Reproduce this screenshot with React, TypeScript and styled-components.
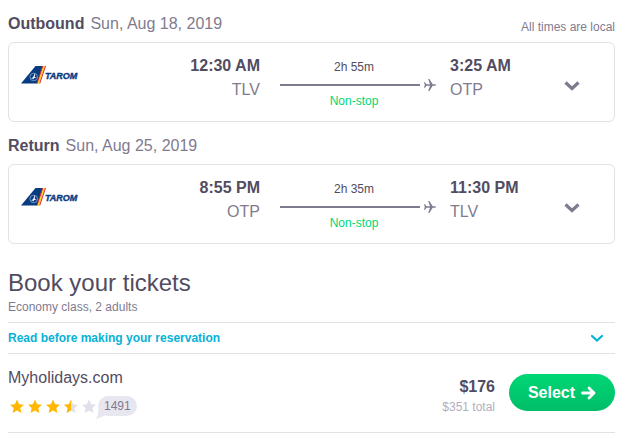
import React from "react";
import styled, { createGlobalStyle } from "styled-components";

const ink = "#524c61";
const muted = "#7f7b8f";
const line = "#e1e1e8";
const green = "#00d775";
const blue = "#06b2d6";

const GlobalStyle = createGlobalStyle`
  * { box-sizing: border-box; }
  body {
    margin: 0;
    background: #fff;
    color: ${ink};
    font-family: "Liberation Sans", Arial, sans-serif;
    font-size: 16px;
    line-height: 24px;
  }
  h2, h3, p { margin: 0; font-weight: 400; }
  button { font: inherit; border: 0; padding: 0; background: none; cursor: pointer; }
  svg { display: block; flex: none; }
`;

const Page = styled.main`
  padding: 0 25px 0 8px;
`;

const LegHeader = styled.header`
  display: flex;
  justify-content: space-between;
  align-items: flex-end;
  padding: 12px 0 6px;
`;

const LegTitle = styled.h3`
  font-size: 16px;
  display: flex;
  gap: 6px;
`;

const LegDate = styled.span`
  color: ${muted};
`;

const Small = styled.p<{ $color?: string }>`
  font-size: 12px;
  line-height: 16px;
  color: ${(p) => p.$color ?? muted};
`;

const Note = styled(Small)`
  line-height: 18px;
`;

const LegCard = styled.article`
  display: grid;
  grid-template-columns: 58px 1fr 190px 102px 40px;
  align-items: start;
  padding: 11px 22px 9px 12px;
  border: 1px solid ${line};
  border-radius: 6px;
`;

const LogoBox = styled.div`
  padding-top: 11px;
`;

const Stop = styled.div<{ $align: "left" | "right" }>`
  text-align: ${(p) => p.$align};
`;

const Airport = styled.div`
  color: ${muted};
`;

const Path = styled.div`
  display: flex;
  flex-direction: column;
  align-items: center;
  padding: 5px 14px 3px 20px;
`;

const Track = styled.div`
  display: flex;
  align-items: center;
  align-self: stretch;
  gap: 4px;
  height: 20px;
  margin-bottom: -2px;
`;

const TrackLine = styled.span`
  flex: 1;
  height: 2px;
  background: ${muted};
`;

const PathText = styled(Small)`
  margin-right: 8px;
`;

const Toggle = styled.button`
  justify-self: center;
  padding: 27px 0 8px;
`;

const Booking = styled.section`
  padding-top: 23px;
`;

const BookingTitle = styled.h2`
  font-size: 24px;
  line-height: 32px;
`;

const Notice = styled.button`
  display: flex;
  align-items: center;
  justify-content: space-between;
  width: 100%;
  height: 32px;
  margin-top: 7px;
  && { padding: 0 12px 0 0; }
  border-top: 1px solid ${line};
  border-bottom: 1px solid ${line};
  color: ${blue};
  font-size: 12px;
  font-weight: 700;
`;

const Offer = styled.div`
  display: flex;
  align-items: flex-start;
  padding: 12px 0 16px;
  border-bottom: 1px solid ${line};
`;

const Agent = styled.div`
  flex: 1;
`;

const Rating = styled.div`
  display: flex;
  align-items: center;
  gap: 4px;
  padding: 6px 0 0 2px;
`;

const Reviews = styled.span`
  position: relative;
  height: 20px;
  margin-left: -2px;
  padding: 0 6px;
  border-radius: 10px;
  background: #e8e6ee;
  color: ${muted};
  font-size: 12px;
  line-height: 20px;
`;

const Tail = styled.svg`
  position: absolute;
  left: -2px;
  bottom: -3px;
`;

const Price = styled.div`
  padding: 9px 14px 0 0;
  text-align: right;
`;

const SelectButton = styled.button`
  display: flex;
  align-items: center;
  justify-content: center;
  gap: 6px;
  width: 106px;
  height: 37px;
  margin-top: 8px;
  border-radius: 19px;
  background: linear-gradient(${green}, #00bd68);
  color: #fff;
  font-weight: 700;
`;

const Wordmark = styled.text`
  font: italic 700 9px "Liberation Sans", Arial, sans-serif;
  fill: #073b82;
  stroke: #073b82;
  stroke-width: 0.4;
`;

function TaromLogo() {
  return (
    <svg width="58" height="20" viewBox="0 0 58 20" overflow="visible" role="img" aria-label="Tarom">
      <path d="M0 18.500 14.500 1h7.300L16 18.500z" fill="#073b82" />
      <path d="M21.300 1h1.400l-5.800 17.500h-1.400z" fill="#d9252e" />
      <path d="M22.300 1H24l-5.800 17.500h-1.700z" fill="#ffd21c" />
      <path d="M24 1h1l-5.800 17.500h-1z" fill="#d9252e" />
      <circle cx="12.700" cy="12" r="3.800" fill="none" stroke="#b9cbe4" strokeWidth=".6" />
      <path d="m10 14 2.300-2.200 1.400-3.300.5.300-.5 3.200 2 .8-2.400.3-1.300 1.600-.2-1.100z" fill="#fff" />
      <Wordmark x="24" y="14">TAROM</Wordmark>
    </svg>
  );
}

function Plane() {
  return (
    <svg width="12" height="14" viewBox="0 0 12 14" aria-hidden="true">
      <path
        d="M0 4.300h.9l1.700 2H6L4.200 1h1.200l3.300 5.300H11c.6 0 1 .3 1 .7s-.4.700-1 .700H8.700L5.400 13H4.200L6 7.700H2.600l-1.700 2H0L.8 7z"
        fill={muted}
      />
    </svg>
  );
}

function Chevron({ small = false }: { small?: boolean }) {
  return (
    <svg width={small ? 12 : 16} height={small ? 8 : 10} viewBox={small ? "0 0 12 8" : "0 0 16 10"} aria-hidden="true">
      <path
        d={small ? "m1 2 5 4.500L11 2" : "m1.500 1.500 6.500 6 6.500-6"}
        fill="none"
        stroke={small ? blue : muted}
        strokeWidth={small ? 2.2 : 3.2}
        strokeLinecap={small ? "round" : "butt"}
      />
    </svg>
  );
}

function Star({ fill }: { fill: "full" | "half" | "none" }) {
  return (
    <svg width="14" height="16" viewBox="0 0 14 16" aria-hidden="true">
      <path
        d="m7 1.500 2.100 4.700 4.900.5-3.700 3.400 1.100 4.900L7 12.500 2.600 15l1.100-4.900L0 6.700l4.900-.5z"
        fill={fill === "full" ? "#ffb700" : "#e1dfe9"}
      />
      {fill === "half" && <path d="M7 1.500v11L2.600 15l1.100-4.900L0 6.700l4.900-.5z" fill="#ffb700" />}
    </svg>
  );
}

interface LegProps {
  name: string;
  date: string;
  note?: string;
  from: [string, string];
  to: [string, string];
  duration: string;
}

function Leg({ name, date, note, from, to, duration }: LegProps) {
  return (
    <section>
      <LegHeader>
        <LegTitle>
          <strong>{name}</strong>
          <LegDate>{date}</LegDate>
        </LegTitle>
        {note && <Note>{note}</Note>}
      </LegHeader>
      <LegCard>
        <LogoBox>
          <TaromLogo />
        </LogoBox>
        <Stop $align="right">
          <strong>{from[0]}</strong>
          <Airport>{from[1]}</Airport>
        </Stop>
        <Path>
          <PathText $color={ink}>{duration}</PathText>
          <Track>
            <TrackLine />
            <Plane />
          </Track>
          <PathText $color={green}>Non-stop</PathText>
        </Path>
        <Stop $align="left">
          <strong>{to[0]}</strong>
          <Airport>{to[1]}</Airport>
        </Stop>
        <Toggle aria-label={`${name} flight details`}>
          <Chevron />
        </Toggle>
      </LegCard>
    </section>
  );
}

export default function App() {
  return (
    <>
      <GlobalStyle />
      <Page>
        <Leg
          name="Outbound"
          date="Sun, Aug 18, 2019"
          note="All times are local"
          from={["12:30 AM", "TLV"]}
          to={["3:25 AM", "OTP"]}
          duration="2h 55m"
        />
        <Leg
          name="Return"
          date="Sun, Aug 25, 2019"
          from={["8:55 PM", "OTP"]}
          to={["11:30 PM", "TLV"]}
          duration="2h 35m"
        />
        <Booking>
          <BookingTitle>Book your tickets</BookingTitle>
          <Small>Economy class, 2 adults</Small>
          <Notice>
            Read before making your reservation
            <Chevron small />
          </Notice>
          <Offer>
            <Agent>
              <div>Myholidays.com</div>
              <Rating>
                <Star fill="full" />
                <Star fill="full" />
                <Star fill="full" />
                <Star fill="half" />
                <Star fill="none" />
                <Reviews>
                  <Tail width="10" height="10" viewBox="0 0 10 10" aria-hidden="true">
                    <path d="M2 0v5L0 10l9-3.500z" fill="#e8e6ee" />
                  </Tail>
                  1491
                </Reviews>
              </Rating>
            </Agent>
            <Price>
              <strong>$176</strong>
              <Small $color="#b2aebd">$351 total</Small>
            </Price>
            <SelectButton>
              Select
              <svg width="15" height="14" viewBox="0 0 15 14" aria-hidden="true">
                <path d="M1.500 7H13M8 2l5 5-5 5" fill="none" stroke="#fff" strokeWidth="2.800" strokeLinecap="round" strokeLinejoin="round" />
              </svg>
            </SelectButton>
          </Offer>
        </Booking>
      </Page>
    </>
  );
}
